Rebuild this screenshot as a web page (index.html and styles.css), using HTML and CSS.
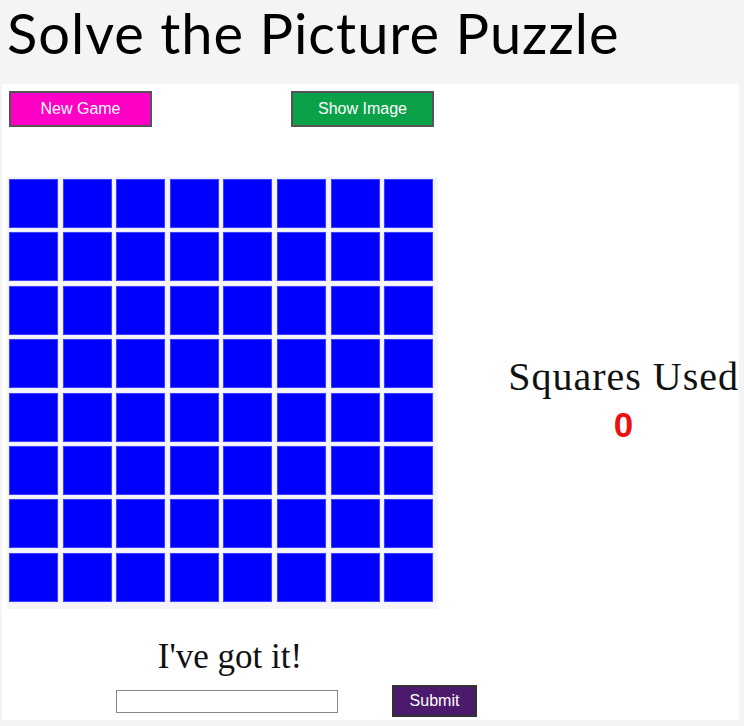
FILE: index.html
```html
<!DOCTYPE html>
<html>
<head>
<meta charset="utf-8">
<link rel="stylesheet" href="styles.css">
</head>
<body>
<header class="header"><h1 class="title">Solve the Picture Puzzle</h1></header>
<main class="panel">
  <div class="game">
    <div class="left">
      <div class="controls">
        <button class="btn btn-new">New Game</button>
        <button class="btn btn-show">Show Image</button>
      </div>
      <div class="board" id="board"></div>
    </div>
    <div class="side">
      <div class="side-label">Squares Used</div>
      <div class="side-count">0</div>
    </div>
  </div>
  <div class="answer">
    <div class="answer-title">I've got it!</div>
    <div class="answer-row">
      <input class="answer-input" type="text">
      <button class="btn btn-submit">Submit</button>
    </div>
  </div>
</main>
<script src="script.js"></script>
</body>
</html>
```
FILE: script.js
```js
var b = document.getElementById('board');
for (var i = 0; i < 64; i++) {
  var c = document.createElement('div');
  c.className = 'cell';
  b.appendChild(c);
}
```
FILE: styles.css
```css
html, body { margin: 0; padding: 0; }
body { background: #f4f4f4; width: 744px; height: 726px; overflow: hidden; }
.header { height: 84px; }
.title {
  margin: 0;
  padding: 2px 0 0 7px;
  font-family: "Lato", sans-serif;
  font-weight: 400;
  font-size: 56px;
  line-height: 62px;
  letter-spacing: 1px;
  color: #000;
}
.panel {
  background: #fff;
  margin-left: 2px;
  width: 737px;
  height: 636px;
  box-sizing: border-box;
  padding: 7px 0 0 7px;
}
.game { display: flex; }
.left { width: 432px; }
.controls { display: flex; justify-content: space-between; width: 425px; }
.btn {
  font-family: "Liberation Sans", Arial, sans-serif;
  font-size: 16px;
  color: #fff;
  border: 2px solid #555;
  cursor: pointer;
  padding: 0;
}
.btn-new { width: 143px; height: 36px; background: #ff00c6; }
.btn-show { width: 143px; height: 36px; background: #0aa148; }
.board {
  margin-top: 50px;
  margin-left: -2px;
  width: 431px;
  height: 432px;
  box-sizing: border-box;
  padding: 2px;
  background: #f6f6fa;
  display: grid;
  grid-template-columns: repeat(8, 49px);
  grid-template-rows: repeat(8, 49px);
  column-gap: 4.6px;
  row-gap: 4.4px;
}
.cell {
  background: #0000ff;
  border: 1px solid #4040ff;
  box-sizing: border-box;
  box-shadow: 0 0 1px #c8c8ff;
}
.side {
  flex: 1;
  display: flex;
  flex-direction: column;
  align-items: center;
  justify-content: center;
  padding-top: 100px;
  padding-left: 68px;
  white-space: nowrap;
}
.side-label {
  font-family: "Liberation Serif", "Times New Roman", serif;
  font-size: 40px;
  line-height: 44px;
  letter-spacing: 1px;
  color: #111;
}
.side-count {
  font-family: "Liberation Sans", Arial, sans-serif;
  font-weight: 700;
  font-size: 35px;
  line-height: 40px;
  color: #ee1111;
  margin-top: 6px;
}
.answer { width: 470px; }
.answer-title {
  font-family: "Liberation Serif", "Times New Roman", serif;
  font-size: 35px;
  line-height: 40px;
  text-align: center;
  margin-top: 28px;
  padding-right: 28px;
  color: #111;
}
.answer-row { display: flex; align-items: center; margin-top: 8px; padding-left: 107px; }
.answer-input {
  width: 222px;
  height: 23px;
  box-sizing: border-box;
  border: 1px solid #888;
  padding: 0;
}
.btn-submit {
  margin-left: 54px;
  width: 85px;
  height: 32px;
  background: #4c1a6c;
  border-color: #333;
}
```
